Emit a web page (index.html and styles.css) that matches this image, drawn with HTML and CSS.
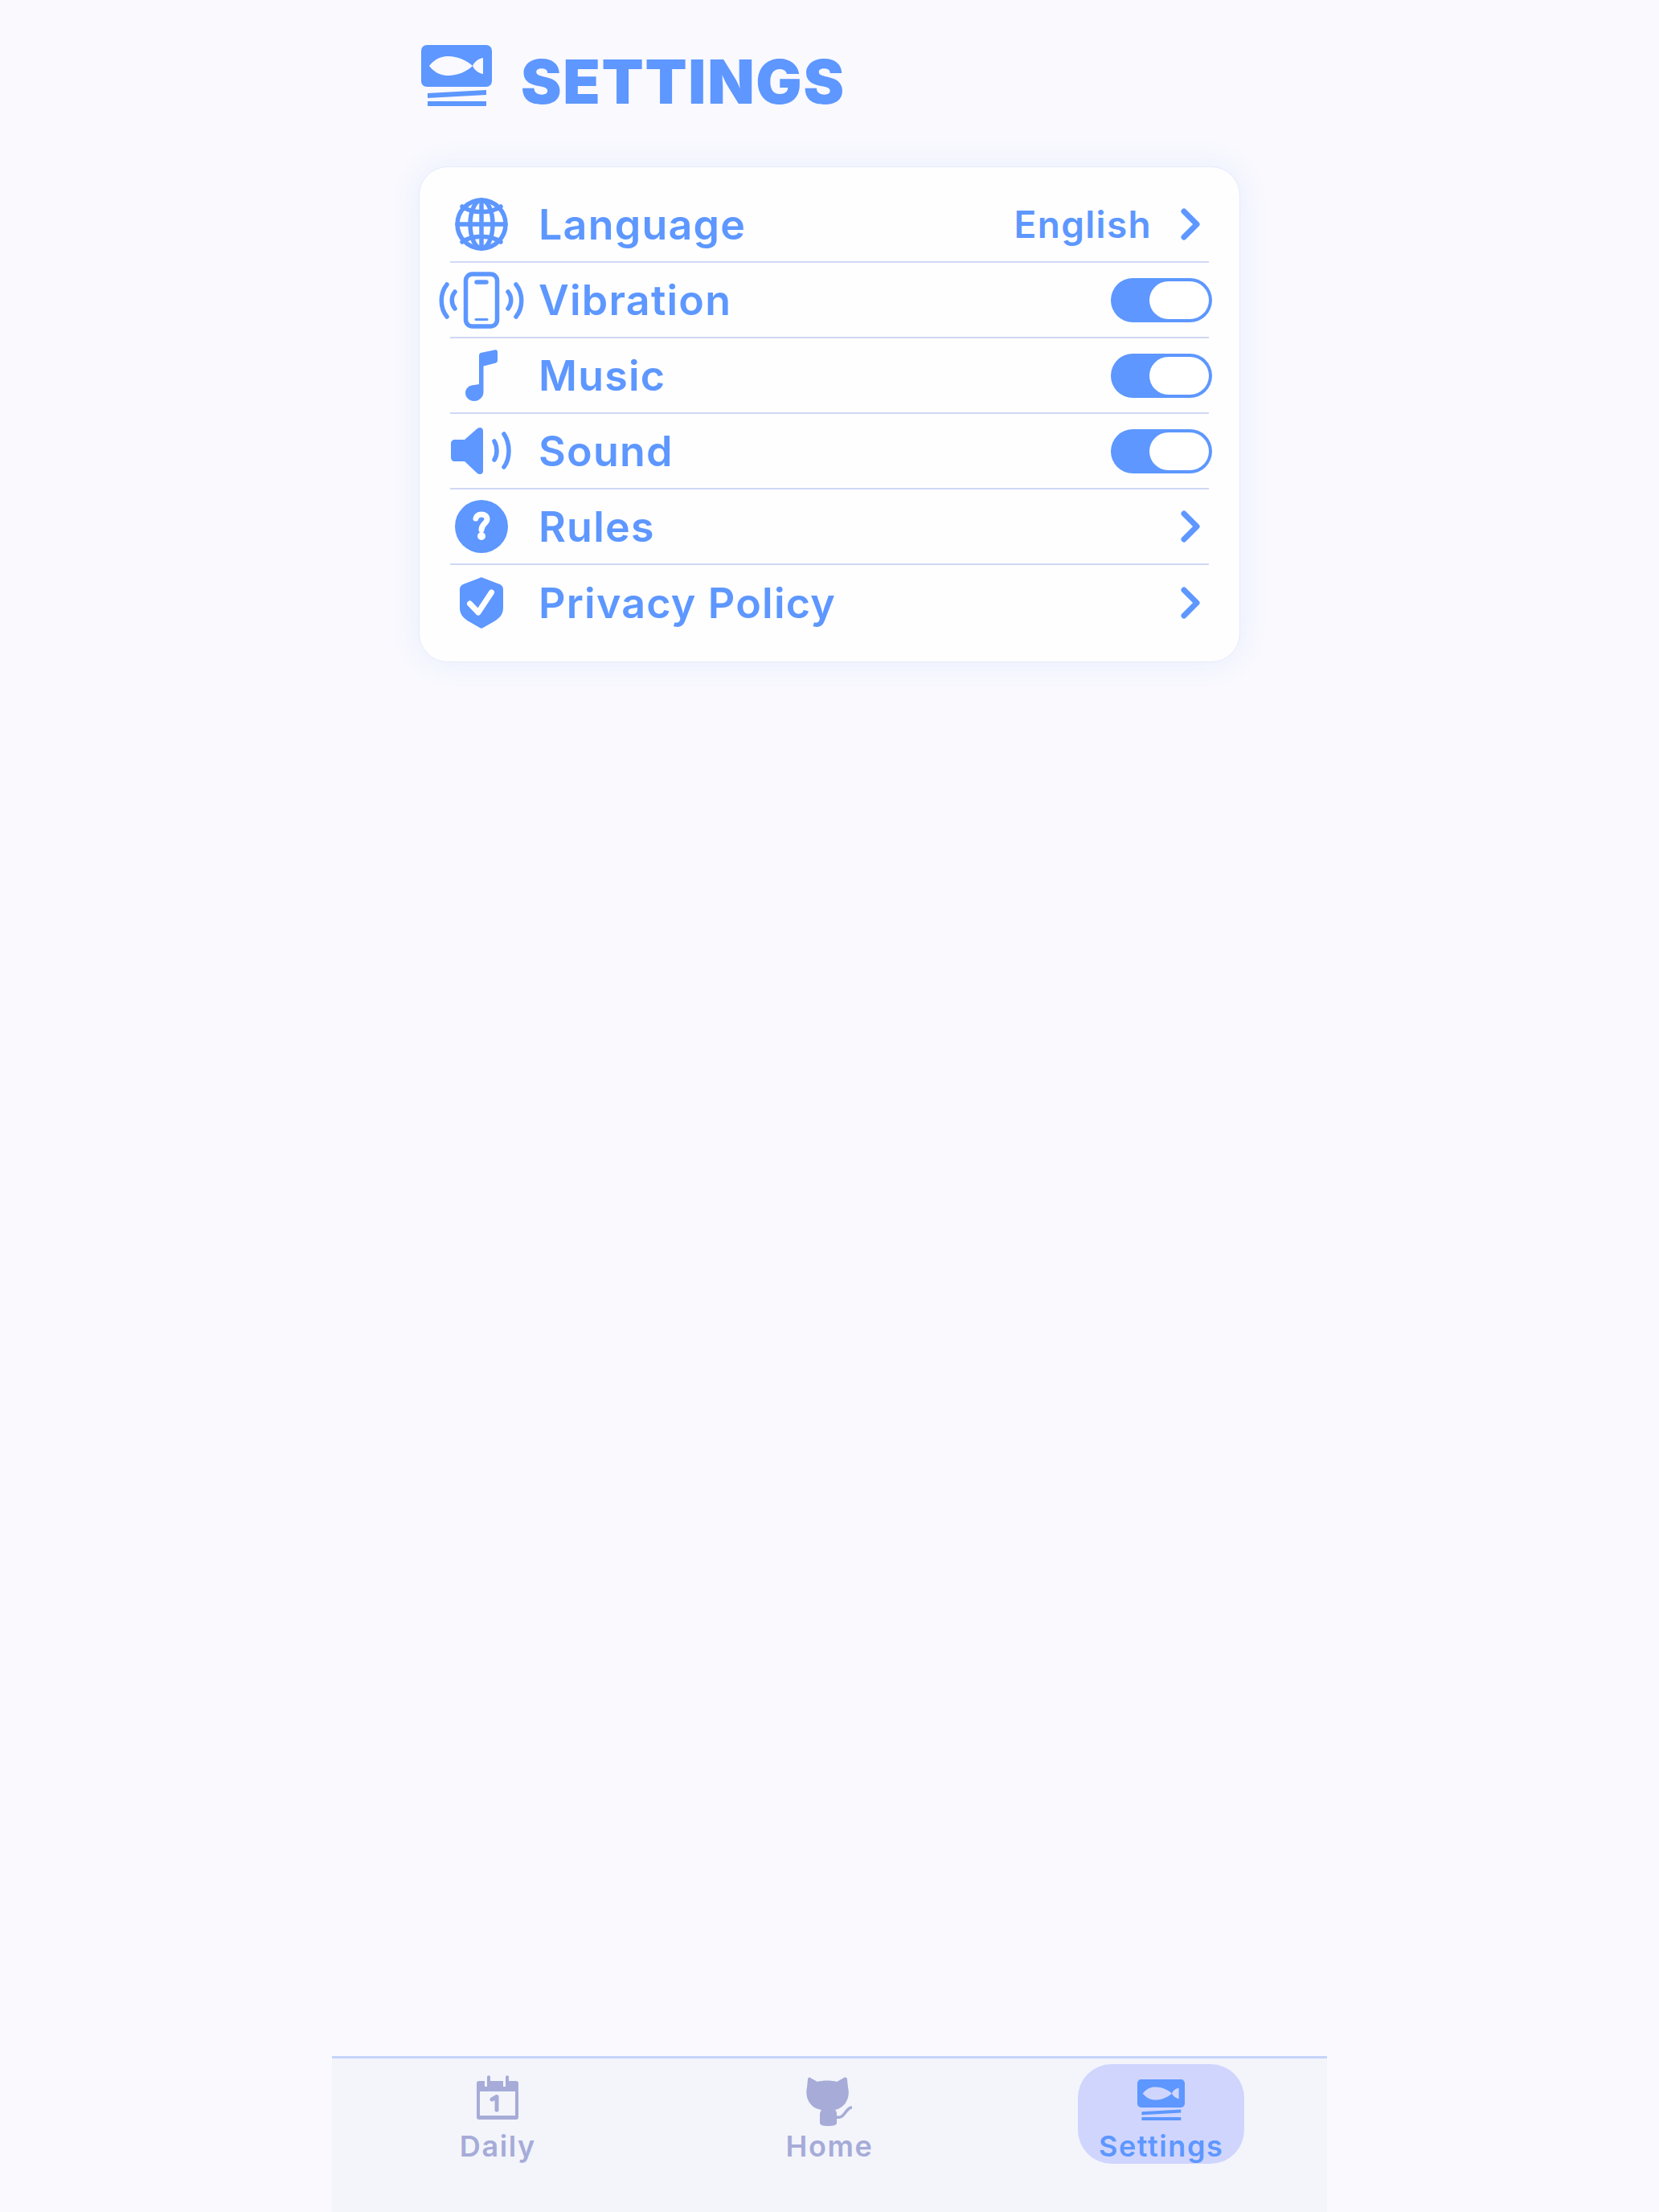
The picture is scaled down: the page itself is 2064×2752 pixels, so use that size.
FILE: index.html
```html
<!DOCTYPE html>
<html lang="en">
<head>
  <meta charset="UTF-8">
  <meta name="viewport" content="width=device-width, initial-scale=1.0">
  <title>Settings</title>
  <link rel="stylesheet" href="styles.css">
</head>
<body>
  <header class="page-header">
    <svg class="logo" viewBox="0 0 88 76">
      <path fill-rule="evenodd" d="M7 0H81a7 7 0 0 1 7 7V45a7 7 0 0 1-7 7H7a7 7 0 0 1-7-7V7a7 7 0 0 1 7-7ZM10 26C18 36 26 38 34 38C45 38 57 33 64 26C66 31 71 35 77 36V16C71 17 66 21 64 26C57 19 45 14 34 14C26 14 18 16 10 26Z"/>
      <path d="M8 60 81 56V62L8 66ZM8 70H81V76H8Z"/>
    </svg>
    <h1>SETTINGS</h1>
  </header>

  <main class="card">
    <div class="row">
      <span class="row-icon">
        <svg class="icon icon-line" viewBox="0 0 66 66" stroke-width="5.5">
          <circle cx="33" cy="33" r="30"/>
          <ellipse cx="33" cy="33" rx="14" ry="30"/>
          <path d="M33 3V63M3 33H63M9 11C22 20 44 20 57 11M9 55C22 46 44 46 57 55"/>
        </svg>
      </span>
      <span class="row-label">Language</span>
      <span class="row-value">English</span>
      <svg class="chevron" viewBox="0 0 24 40"><path d="M4 4 20 20 4 36"/></svg>
    </div>

    <div class="row">
      <span class="row-icon">
        <svg class="icon-wide icon-line" viewBox="0 0 108 72" stroke-width="5.5">
          <rect x="34.5" y="4" width="39" height="65" rx="8"/>
          <path d="M48 14H60"/>
          <path d="M47 60.500H61" stroke-width="3"/>
          <path d="M11 17C2 28 2 46 11 57M21 26C16 32 16 41 21 47M87 26C92 32 92 41 87 47M97 17C106 28 106 46 97 57"/>
        </svg>
      </span>
      <span class="row-label">Vibration</span>
      <span class="toggle"><span class="toggle-knob"></span></span>
    </div>

    <div class="row">
      <span class="row-icon">
        <svg class="icon-music" viewBox="0 0 40 64">
          <path d="M17 7C17 5.500 18 4.500 19 4L37 .3C39 0 40 1 40 3V13C40 15 39 16 38 16.400L22.500 20.500V53C22.500 59 17 64 11 64C5 64 0 59.500 0 54C0 48 5 44 11 44L17 43Z"/>
        </svg>
      </span>
      <span class="row-label">Music</span>
      <span class="toggle"><span class="toggle-knob"></span></span>
    </div>

    <div class="row">
      <span class="row-icon">
        <svg class="icon-sound" viewBox="0 0 76 58">
          <path d="M5 15H17L33 1C36-1 40 0 40 4V54C40 58 36 59 33 57L17 42H5C2 42 0 40 0 37V20C0 17 2 15 5 15Z"/>
          <path class="arc" d="M54 17C58 24 58 34 54 40M66 8C74 20 74 38 66 49"/>
        </svg>
      </span>
      <span class="row-label">Sound</span>
      <span class="toggle"><span class="toggle-knob"></span></span>
    </div>

    <div class="row">
      <span class="row-icon">
        <svg class="icon" viewBox="0 0 66 66">
          <circle cx="33" cy="33" r="33"/>
          <path class="mark" d="M26 23C27 19 30 18 33 18C37 18 40 20 40 24C40 29 33 30 33 37"/>
          <circle cx="33" cy="45" r="5" fill="#fff"/>
        </svg>
      </span>
      <span class="row-label">Rules</span>
      <svg class="chevron" viewBox="0 0 24 40"><path d="M4 4 20 20 4 36"/></svg>
    </div>

    <div class="row">
      <span class="row-icon">
        <svg class="icon-shield" viewBox="0 0 54 64">
          <path d="M25 1C26 0 28 0 29 1L50 9C52 10 54 12 54 15V38C54 47 49 51 43 55L29 63C28 64 26 64 25 63L11 55C5 51 0 47 0 38V15C0 12 2 10 4 9Z"/>
          <path class="mark" d="M12.500 33 23 44 39.500 19"/>
        </svg>
      </span>
      <span class="row-label">Privacy Policy</span>
      <svg class="chevron" viewBox="0 0 24 40"><path d="M4 4 20 20 4 36"/></svg>
    </div>
  </main>

  <nav class="tabbar">
    <div class="tab">
      <div class="tab-inner">
        <span class="tab-icon">
          <svg class="cal" viewBox="0 0 52 55">
            <path fill-rule="evenodd" d="M3 7H10V14H13V2C13-.5 17-.5 17 2V7H33V14H36V2C36-.5 40-.5 40 2V7H49C51 7 52 8 52 10V52C52 54 51 55 49 55H3C1 55 0 54 0 52V10C0 8 1 7 3 7ZM4 20V50H48V20Z"/>
            <path class="cal-digit" d="M19 30 25 26.500V43"/>
          </svg>
        </span>
        <span>Daily</span>
      </div>
    </div>
    <div class="tab">
      <div class="tab-inner">
        <span class="tab-icon">
          <svg class="cat" viewBox="0 0 57 61">
            <path d="M2 3C2 1 4 0 5 1L14 6C20 4 32 4 38 6L47 1C49 0 51 1 51 3L52 13C55 24 50 38 36 41C38 43 38 45 38 47V57C38 60 34 61 27 61C21 61 17 60 17 57V47C17 44 18 43 19 41C5 39 -2 26 1 13Z"/>
            <path class="cat-tail" d="M38 50C48 52 48 40 56 38"/>
          </svg>
        </span>
        <span>Home</span>
      </div>
    </div>
    <div class="tab">
      <div class="tab-inner active">
        <span class="tab-icon">
          <svg class="logo-small" viewBox="0 0 88 76">
            <path fill-rule="evenodd" d="M7 0H81a7 7 0 0 1 7 7V45a7 7 0 0 1-7 7H7a7 7 0 0 1-7-7V7a7 7 0 0 1 7-7ZM10 26C18 36 26 38 34 38C45 38 57 33 64 26C66 31 71 35 77 36V16C71 17 66 21 64 26C57 19 45 14 34 14C26 14 18 16 10 26Z"/>
            <path d="M8 60 81 56V62L8 66ZM8 70H81V76H8Z"/>
          </svg>
        </span>
        <span>Settings</span>
      </div>
    </div>
  </nav>
</body>
</html>
```

FILE: styles.css
```css
* {
  box-sizing: border-box;
}
body {
  margin: 0;
  min-height: 2752px;
  display: flex;
  flex-direction: column;
  align-items: center;
  background: #f9f9fe;
  color: #5d97ff;
  font-family: Inter, "Liberation Sans", sans-serif;
}
svg {
  fill: currentColor;
  display: block;
}
.page-header {
  width: 1022px;
  padding: 56px 0 0 3px;
  height: 207px;
  display: flex;
  align-items: flex-start;
  gap: 36px;
}
.logo {
  width: 88px;
  height: 76px;
}
.page-header h1 {
  margin: 6px 0 0;
  font-size: 76px;
  line-height: 78px;
  font-weight: 900;
  letter-spacing: 1.7px;
}
.card {
  width: 1022px;
  padding: 25px 38px 26px;
  background: #fefeff;
  border: 1px solid #e6ebfc;
  border-radius: 36px;
  box-shadow: 0 0 36px rgba(93, 151, 255, 0.1);
}
.row {
  height: 94px;
  display: flex;
  align-items: center;
  border-bottom: 2px solid #d0d8f5;
}
.row:last-child {
  border-bottom: none;
}
.row-icon {
  width: 78px;
  margin-right: 32px;
  display: flex;
  justify-content: center;
}
.icon {
  width: 66px;
  height: 66px;
  flex: none;
}
.icon-wide {
  width: 108px;
  height: 72px;
  flex: none;
}
.icon-line {
  fill: none;
  stroke: currentColor;
  stroke-linecap: round;
}
.icon-music {
  width: 40px;
  height: 64px;
  flex: none;
}
.icon-sound {
  width: 76px;
  height: 58px;
  flex: none;
}
.icon-shield {
  width: 54px;
  height: 64px;
  flex: none;
}
.arc {
  fill: none;
  stroke: currentColor;
  stroke-width: 5.5;
  stroke-linecap: round;
}
.mark {
  fill: none;
  stroke: #fff;
  stroke-width: 7;
  stroke-linecap: round;
  stroke-linejoin: round;
}
.row-label {
  flex: 1;
  font-size: 52px;
  font-weight: 600;
  letter-spacing: 1.2px;
}
.row-value {
  font-size: 46px;
  font-weight: 600;
  letter-spacing: 1.3px;
  margin-right: 36px;
}
.chevron {
  width: 24px;
  height: 40px;
  margin-right: 11px;
  fill: none;
  stroke: currentColor;
  stroke-width: 7;
  stroke-linecap: round;
  stroke-linejoin: round;
}
.toggle {
  width: 126px;
  height: 55px;
  margin-right: -4px;
  padding: 4px;
  display: flex;
  justify-content: flex-end;
  background: #5d97ff;
  border-radius: 28px;
}
.toggle-knob {
  width: 74px;
  height: 47px;
  background: #fff;
  border-radius: 24px;
}
.tabbar {
  width: 1238px;
  height: 194px;
  margin-top: auto;
  display: grid;
  grid-template-columns: repeat(3, 1fr);
  background: #f3f5fb;
  border-top: 3px solid #c5d4fb;
}
.tab {
  display: flex;
  justify-content: center;
  padding-top: 7px;
  color: #a6abd8;
}
.tab-inner {
  width: 207px;
  height: 124px;
  display: flex;
  flex-direction: column;
  align-items: center;
  font-size: 36px;
  font-weight: 600;
  letter-spacing: 1.6px;
  line-height: 44px;
  border-radius: 42px;
}
.tab-inner.active {
  background: #d0d5fe;
  color: #5d97ff;
}
.tab-icon {
  height: 80px;
  display: flex;
  align-items: flex-end;
  padding-bottom: 3px;
}
.cal {
  width: 52px;
  height: 55px;
  margin-bottom: 8px;
}
.cal-digit {
  fill: none;
  stroke: currentColor;
  stroke-width: 5;
  stroke-linecap: round;
  stroke-linejoin: round;
}
.cat {
  width: 57px;
  height: 61px;
}
.cat-tail {
  fill: none;
  stroke: currentColor;
  stroke-width: 3.5;
  stroke-linecap: round;
}
.logo-small {
  width: 59px;
  height: 51px;
  margin-bottom: 7px;
}
```
